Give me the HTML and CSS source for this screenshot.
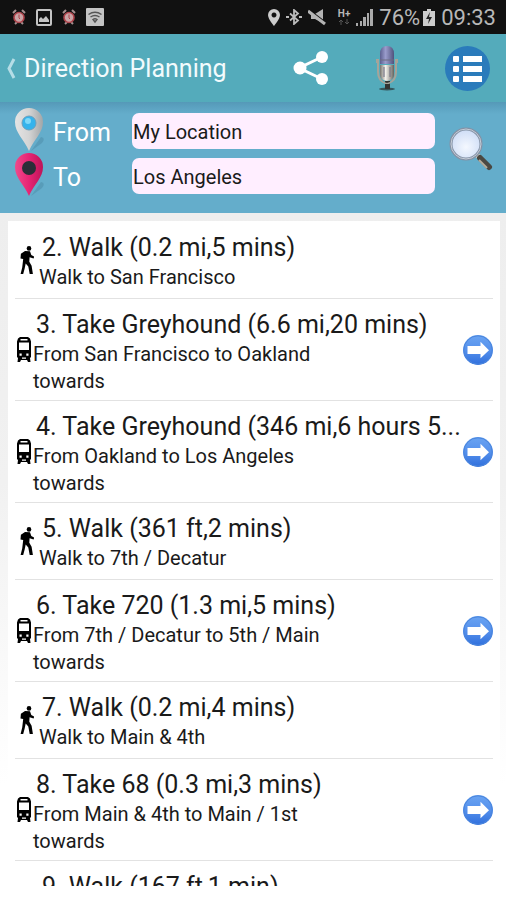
FILE: index.html
```html
<!DOCTYPE html>
<html lang="en">
<head>
    <meta charset="UTF-8">
    <meta name="viewport" content="width=device-width, initial-scale=1.0">
    <title>Direction Planning</title>
    <link rel="stylesheet" href="styles.css">
</head>
<body>
    <!-- shared icons -->
    <svg class="defs" width="0" height="0" aria-hidden="true">
        <defs>
            <linearGradient id="blue" x1="0" y1="0" x2="0" y2="1">
                <stop offset="0" stop-color="#6aa4f2"/>
                <stop offset="0.5" stop-color="#5590ec"/>
                <stop offset="1" stop-color="#2f6fdc"/>
            </linearGradient>
            <linearGradient id="silver" x1="0" x2="1">
                <stop offset="0" stop-color="#e4e4e4"/>
                <stop offset="0.5" stop-color="#d4d4d4"/>
                <stop offset="1" stop-color="#a2a6a8"/>
            </linearGradient>
            <linearGradient id="pink" x1="0" x2="1">
                <stop offset="0" stop-color="#ef4a8c"/>
                <stop offset="0.5" stop-color="#e62474"/>
                <stop offset="1" stop-color="#bd1458"/>
            </linearGradient>
            <linearGradient id="mic-head" x1="0" x2="1">
                <stop offset="0" stop-color="#5c5f90"/>
                <stop offset="0.4" stop-color="#9a9ccc"/>
                <stop offset="1" stop-color="#50527c"/>
            </linearGradient>
            <linearGradient id="mic-body" x1="0" x2="1">
                <stop offset="0" stop-color="#77756f"/>
                <stop offset="0.4" stop-color="#f4f2ec"/>
                <stop offset="1" stop-color="#66645f"/>
            </linearGradient>
            <radialGradient id="glass" cx="0.5" cy="0.6" r="0.6">
                <stop offset="0" stop-color="#f4f8ff"/>
                <stop offset="1" stop-color="#cddcf6"/>
            </radialGradient>
        </defs>
        <symbol id="alarm" viewBox="0 0 14 16">
            <path d="M1 4l3-3M13 4l-3-3M3 15l2-2M11 15l-2-2" stroke="#a58f8f" stroke-width="2"/>
            <circle cx="7" cy="8.500" r="5" fill="#c9a4a6" stroke="#b0444c" stroke-width="1.600"/>
            <path d="M7 5.500v3.500l1 1" stroke="#b0444c" fill="none"/>
        </symbol>
        <symbol id="walk" viewBox="0 0 14 28">
            <circle cx="9" cy="2.400" r="2.300"/>
            <path d="M5 5l5 .3 1.300 3.600 2.900 1.600-.6 2-4-1.300-.3 4.600 2.300 4 1.300 8.200H9.700L8.300 20.500l-2.600-3-1.100 5.300L3.200 28H.6l1.600-6.500 1-8.500-2.700-.4.4-4.800z"/>
        </symbol>
        <symbol id="bus" viewBox="0 0 14 26">
            <path fill-rule="evenodd" d="M3 0h8l2 1.500 1 3V20l-1 1 .5 4h-2.500l-1-2H4l-1 2H.5L1 21l-1-1V4.500l1-3zM3.500 2v1.400h7V2zM2 5.500V13h10V5.500zM2.500 16.500v2.200h2.200v-2.200zM9.300 16.500v2.200h2.200v-2.200zM5 20.500v1.200h4v-1.200z"/>
        </symbol>
        <symbol id="arrow" viewBox="0 0 30 30">
            <circle cx="15" cy="15" r="15" fill="url(#blue)"/>
            <circle cx="15" cy="15" r="14.200" fill="none" stroke="#4b86dc"/>
            <path d="M4.500 11h13V6.800l8.500 8.400-8.500 8V19h-13z" fill="#fff"/>
        </symbol>
    </svg>

    <div class="status-bar">
        <svg class="status-icon" width="14" height="16"><use href="#alarm"/></svg>
        <svg class="status-icon" width="16" height="17" viewBox="0 0 16 17">
            <rect x="1" y="1" width="14" height="15" rx="1" fill="none" stroke="#c4c4c4" stroke-width="2"/>
            <path d="M3 13V10l2-2 2 2 3-3 3 4v2z" fill="#c4c4c4"/>
        </svg>
        <svg class="status-icon" width="14" height="16"><use href="#alarm"/></svg>
        <svg class="status-icon" width="18" height="18" viewBox="0 0 18 18">
            <rect width="18" height="18" rx="1" fill="#c4c4c4"/>
            <path d="M2.500 6.500q6.500-4.500 13 0M4.500 9q4.500-3 9 0M7 11.500q2-1.500 4 0L9 14z" fill="none" stroke="#555" stroke-width="1.500"/>
        </svg>
        <div class="status-right">
            <svg width="12" height="17" viewBox="0 0 12 17">
                <path fill-rule="evenodd" d="M6 0a6 6 0 0 1 6 6c0 4-6 11-6 11S0 10 0 6a6 6 0 0 1 6-6zm0 3.500a2.500 2.500 0 1 0 .01 0z" fill="#ccc"/>
            </svg>
            <svg width="16" height="16" viewBox="0 0 16 16">
                <path d="M4 4.500l8 7L8 15V1l4 3.500-8 7" fill="none" stroke="#bbb" stroke-width="1.800"/>
                <path d="M0 8h3M13 8h3" stroke="#bbb" stroke-width="2"/>
            </svg>
            <svg width="18" height="17" viewBox="0 0 18 17">
                <path d="M3 5h4l8-5v14l-8-4H3z" fill="#b4b4b4"/>
                <path d="M1 1l17 13" stroke="#111" stroke-width="2"/>
                <path d="M0 2l17 13" stroke="#b4b4b4" stroke-width="3"/>
            </svg>
            <span class="network">
                <span>H+</span>
                <svg width="10" height="6" viewBox="0 0 10 6"><path d="M2 1v5M0 3l2-2 2 2M8 0v5M6 3l2 2 2-2" fill="none" stroke="#555"/></svg>
            </span>
            <svg width="17" height="17" viewBox="0 0 17 17" fill="#aaa">
                <path d="M0 14h2v3H0zM4 12h2v5H4zM7 8h3v9H7zM11 4h2v13h-2zM14 0h3v17h-3z"/>
            </svg>
            <span class="percent">76%</span>
            <svg width="12" height="17" viewBox="0 0 12 17">
                <path d="M4 0h4v2h4v15H0V2h4z" fill="#ccc"/>
                <path d="M7 3L3 10h3l-1 5 4-7H6z" fill="#222"/>
            </svg>
            <span>09:33</span>
        </div>
    </div>

    <header class="top-bar">
        <button class="back-btn" type="button" aria-label="Back">
            <svg width="10" height="21" viewBox="0 0 10 21"><path d="M8 1L3 10.500 8 20" fill="none" stroke="#b5dde6" stroke-width="3"/></svg>
        </button>
        <h1>Direction Planning</h1>
        <div class="actions">
            <button type="button" aria-label="Share">
                <svg width="36" height="36" viewBox="0 0 36 36">
                    <path d="M29 7L6 18l23 11" fill="none" stroke="#fff" stroke-width="3"/>
                    <g fill="#fff"><circle cx="29" cy="7" r="6"/><circle cx="7" cy="18" r="6.500"/><circle cx="29" cy="29" r="6"/></g>
                </svg>
            </button>
            <button type="button" aria-label="Voice input">
                <svg width="24" height="46" viewBox="0 0 24 46">
                    <ellipse cx="12" cy="44" rx="8" ry="1.500" fill="#35565c"/>
                    <path d="M10 36h5v8h-5z" fill="#333"/>
                    <path d="M1 14h3v12q0 10 8 12 8-2 8-12V14h3v4h-1v9q0 9-8 12h-4q-8-3-8-12v-9H1z" fill="#a5a49a"/>
                    <path d="M5 20h14v10q0 5-7 6-7-1-7-6z" fill="url(#mic-body)"/>
                    <path d="M5 9q0-8 7-8t7 8v10H5z" fill="url(#mic-head)"/>
                    <path d="M5 15h14M9 22v10M15 22v10" stroke="#6d6d80"/>
                </svg>
            </button>
            <button type="button" aria-label="Steps list">
                <svg width="45" height="45" viewBox="0 0 45 45">
                    <circle cx="22.500" cy="22.500" r="22.500" fill="#2a7bbb"/>
                    <g fill="#fff">
                        <rect x="8" y="10" width="6" height="6" rx="1"/><rect x="18" y="10" width="19" height="6"/>
                        <rect x="8" y="20" width="6" height="6" rx="1"/><rect x="18" y="20" width="19" height="6"/>
                        <rect x="8" y="30" width="6" height="6" rx="1"/><rect x="18" y="30" width="19" height="6"/>
                    </g>
                </svg>
            </button>
        </div>
    </header>

    <form class="search-form">
        <div class="fields">
            <svg width="34" height="45" viewBox="0 0 34 45">
                <path d="M17 43l11-8q4-5-1-6z" fill="#4b8ba7" opacity="0.5"/>
                <path d="M15 0a14 14 0 0 1 14 14c0 11-9 17-14 29C10 31 1 25 1 14A14 14 0 0 1 15 0z" fill="url(#silver)"/>
                <circle cx="15" cy="15" r="7" fill="#35b3ec" stroke="#6c9fbb"/>
                <circle cx="14" cy="13" r="3" fill="#7fd8f8"/>
            </svg>
            <label for="from">From</label>
            <input type="text" id="from" value="My Location">
            <svg width="34" height="45" viewBox="0 0 34 45">
                <path d="M17 43l11-8q4-5-1-6z" fill="#4b8ba7" opacity="0.5"/>
                <path d="M15 0a14 14 0 0 1 14 14c0 11-9 17-14 29C10 31 1 25 1 14A14 14 0 0 1 15 0z" fill="url(#pink)"/>
                <circle cx="15" cy="15" r="7" fill="#2b2e38"/>
            </svg>
            <label for="to">To</label>
            <input type="text" id="to" value="Los Angeles">
        </div>
        <button class="search-btn" type="button" aria-label="Search">
            <svg width="44" height="44" viewBox="0 0 44 44">
                <path d="M28 28l5 5" stroke="#d7d2c4" stroke-width="5"/>
                <path d="M31 31l9 9" stroke="#4a4842" stroke-width="6" stroke-linecap="round"/>
                <path d="M30 33l8 8" stroke="#b3ad9c" stroke-width="2"/>
                <circle cx="17" cy="17" r="15" fill="url(#glass)" stroke="#8492a6" stroke-width="3"/>
                <circle cx="17" cy="17" r="15" fill="none" stroke="#c5cdd8"/>
            </svg>
        </button>
    </form>

    <main class="results">
        <ol class="steps">
            <li class="step walk">
                <svg class="mode" width="14" height="28"><use href="#walk"/></svg>
                <div class="text"><h2>2. Walk (0.2 mi,5 mins)</h2><p>Walk to San Francisco</p></div>
            </li>
            <li class="step transit">
                <svg class="mode" width="14" height="26"><use href="#bus"/></svg>
                <div class="text"><h2>3. Take Greyhound (6.6 mi,20 mins)</h2><p>From San Francisco to Oakland</p><p>towards</p></div>
                <button type="button" aria-label="Show step 3"><svg width="30" height="30"><use href="#arrow"/></svg></button>
            </li>
            <li class="step transit">
                <svg class="mode" width="14" height="26"><use href="#bus"/></svg>
                <div class="text"><h2>4. Take Greyhound (346 mi,6 hours 5...</h2><p>From Oakland to Los Angeles</p><p>towards</p></div>
                <button type="button" aria-label="Show step 4"><svg width="30" height="30"><use href="#arrow"/></svg></button>
            </li>
            <li class="step walk">
                <svg class="mode" width="14" height="28"><use href="#walk"/></svg>
                <div class="text"><h2>5. Walk (361 ft,2 mins)</h2><p>Walk to 7th / Decatur</p></div>
            </li>
            <li class="step transit">
                <svg class="mode" width="14" height="26"><use href="#bus"/></svg>
                <div class="text"><h2>6. Take 720 (1.3 mi,5 mins)</h2><p>From 7th / Decatur to 5th / Main</p><p>towards</p></div>
                <button type="button" aria-label="Show step 6"><svg width="30" height="30"><use href="#arrow"/></svg></button>
            </li>
            <li class="step walk">
                <svg class="mode" width="14" height="28"><use href="#walk"/></svg>
                <div class="text"><h2>7. Walk (0.2 mi,4 mins)</h2><p>Walk to Main &amp; 4th</p></div>
            </li>
            <li class="step transit">
                <svg class="mode" width="14" height="26"><use href="#bus"/></svg>
                <div class="text"><h2>8. Take 68 (0.3 mi,3 mins)</h2><p>From Main &amp; 4th to Main / 1st</p><p>towards</p></div>
                <button type="button" aria-label="Show step 8"><svg width="30" height="30"><use href="#arrow"/></svg></button>
            </li>
            <li class="step walk">
                <div class="text no-icon"><h2>9. Walk (167 ft,1 min)</h2></div>
            </li>
        </ol>
    </main>
</body>
</html>
```

FILE: styles.css
```css
* {
    box-sizing: border-box;
}

body {
    margin: 0;
    height: 100vh;
    padding-bottom: 14px;
    display: flex;
    flex-direction: column;
    overflow: hidden;
    font-family: Roboto, "Liberation Sans", sans-serif;
    background-color: #fff;
    color: #1a1a1a;
}

h1, h2, p {
    margin: 0;
    font-weight: 400;
}

svg {
    display: block;
    flex: none;
}

button {
    padding: 0;
    border: 0;
    background: none;
    cursor: pointer;
}

.defs {
    position: absolute;
}

/* phone status bar */
.status-bar {
    flex: none;
    height: 34px;
    padding: 0 10px 0 12px;
    display: flex;
    align-items: center;
    gap: 10px;
    background-color: #111;
    color: #b8b8b8;
    font-size: 22px;
}

.status-right {
    margin-left: auto;
    display: flex;
    align-items: center;
    gap: 6px;
}

.network {
    display: flex;
    flex-direction: column;
    align-items: center;
    margin: 0 0 0 6px;
    font-size: 10px;
    line-height: 10px;
    font-weight: 700;
}

.percent {
    margin-right: -3px;
}

/* title bar */
.top-bar {
    flex: none;
    height: 68px;
    padding: 0 16px 0 6px;
    display: flex;
    align-items: center;
    gap: 8px;
    background-color: #54abbb;
}

.top-bar h1 {
    color: #f2fbfd;
    font-size: 25px;
    line-height: 30px;
    padding-top: 2px;
}

.actions {
    margin-left: auto;
    display: flex;
    align-items: center;
    gap: 46px;
}

/* from / to */
.search-form {
    flex: none;
    height: 111px;
    padding: 6px 13px 0 14px;
    display: flex;
    align-items: flex-start;
    gap: 14px;
    background: linear-gradient(#5599b8, #64adcb 12px);
}

.fields {
    flex: 1;
    display: grid;
    grid-template-columns: 34px 74px 1fr;
    grid-auto-rows: 45px;
    column-gap: 5px;
    align-items: center;
}

.fields label {
    padding-top: 3px;
    color: #fff;
    font-size: 25px;
}

.fields input {
    width: 100%;
    height: 36px;
    padding: 2px 1px 0;
    border: 0;
    border-radius: 7px;
    background-color: #ffeeff;
    color: #1a1a1a;
    font-family: inherit;
    font-size: 20px;
}

.search-btn {
    margin-top: 19px;
}

/* steps */
.results {
    flex: 1;
    min-height: 0;
    overflow: hidden;
    padding: 8px 6px 0 8px;
    background: linear-gradient(#eee, #f1f1f1 40%, #fff 85%);
}

.steps {
    margin: 0;
    padding: 1px 7px 0;
    list-style: none;
    background-color: #fff;
}

.step {
    display: flex;
    align-items: center;
    border-bottom: 1px solid #e2e2e2;
}

.walk {
    height: 77px;
}

.transit {
    height: 102px;
}

.text {
    flex: 1;
    min-width: 0;
    align-self: flex-start;
    padding-top: 10px;
    white-space: nowrap;
}

.text h2 {
    font-size: 25px;
    line-height: 32px;
}

.text p {
    font-size: 20px;
    line-height: 27px;
}

.walk .mode {
    margin-left: 5px;
}

.walk .text {
    padding-left: 5px;
}

.walk h2 {
    padding-left: 3px;
}

.walk .no-icon {
    padding-left: 24px;
}

.transit .mode {
    margin-left: 2px;
}

.transit .text {
    padding-left: 2px;
}

.transit h2 {
    padding-left: 3px;
}
```
